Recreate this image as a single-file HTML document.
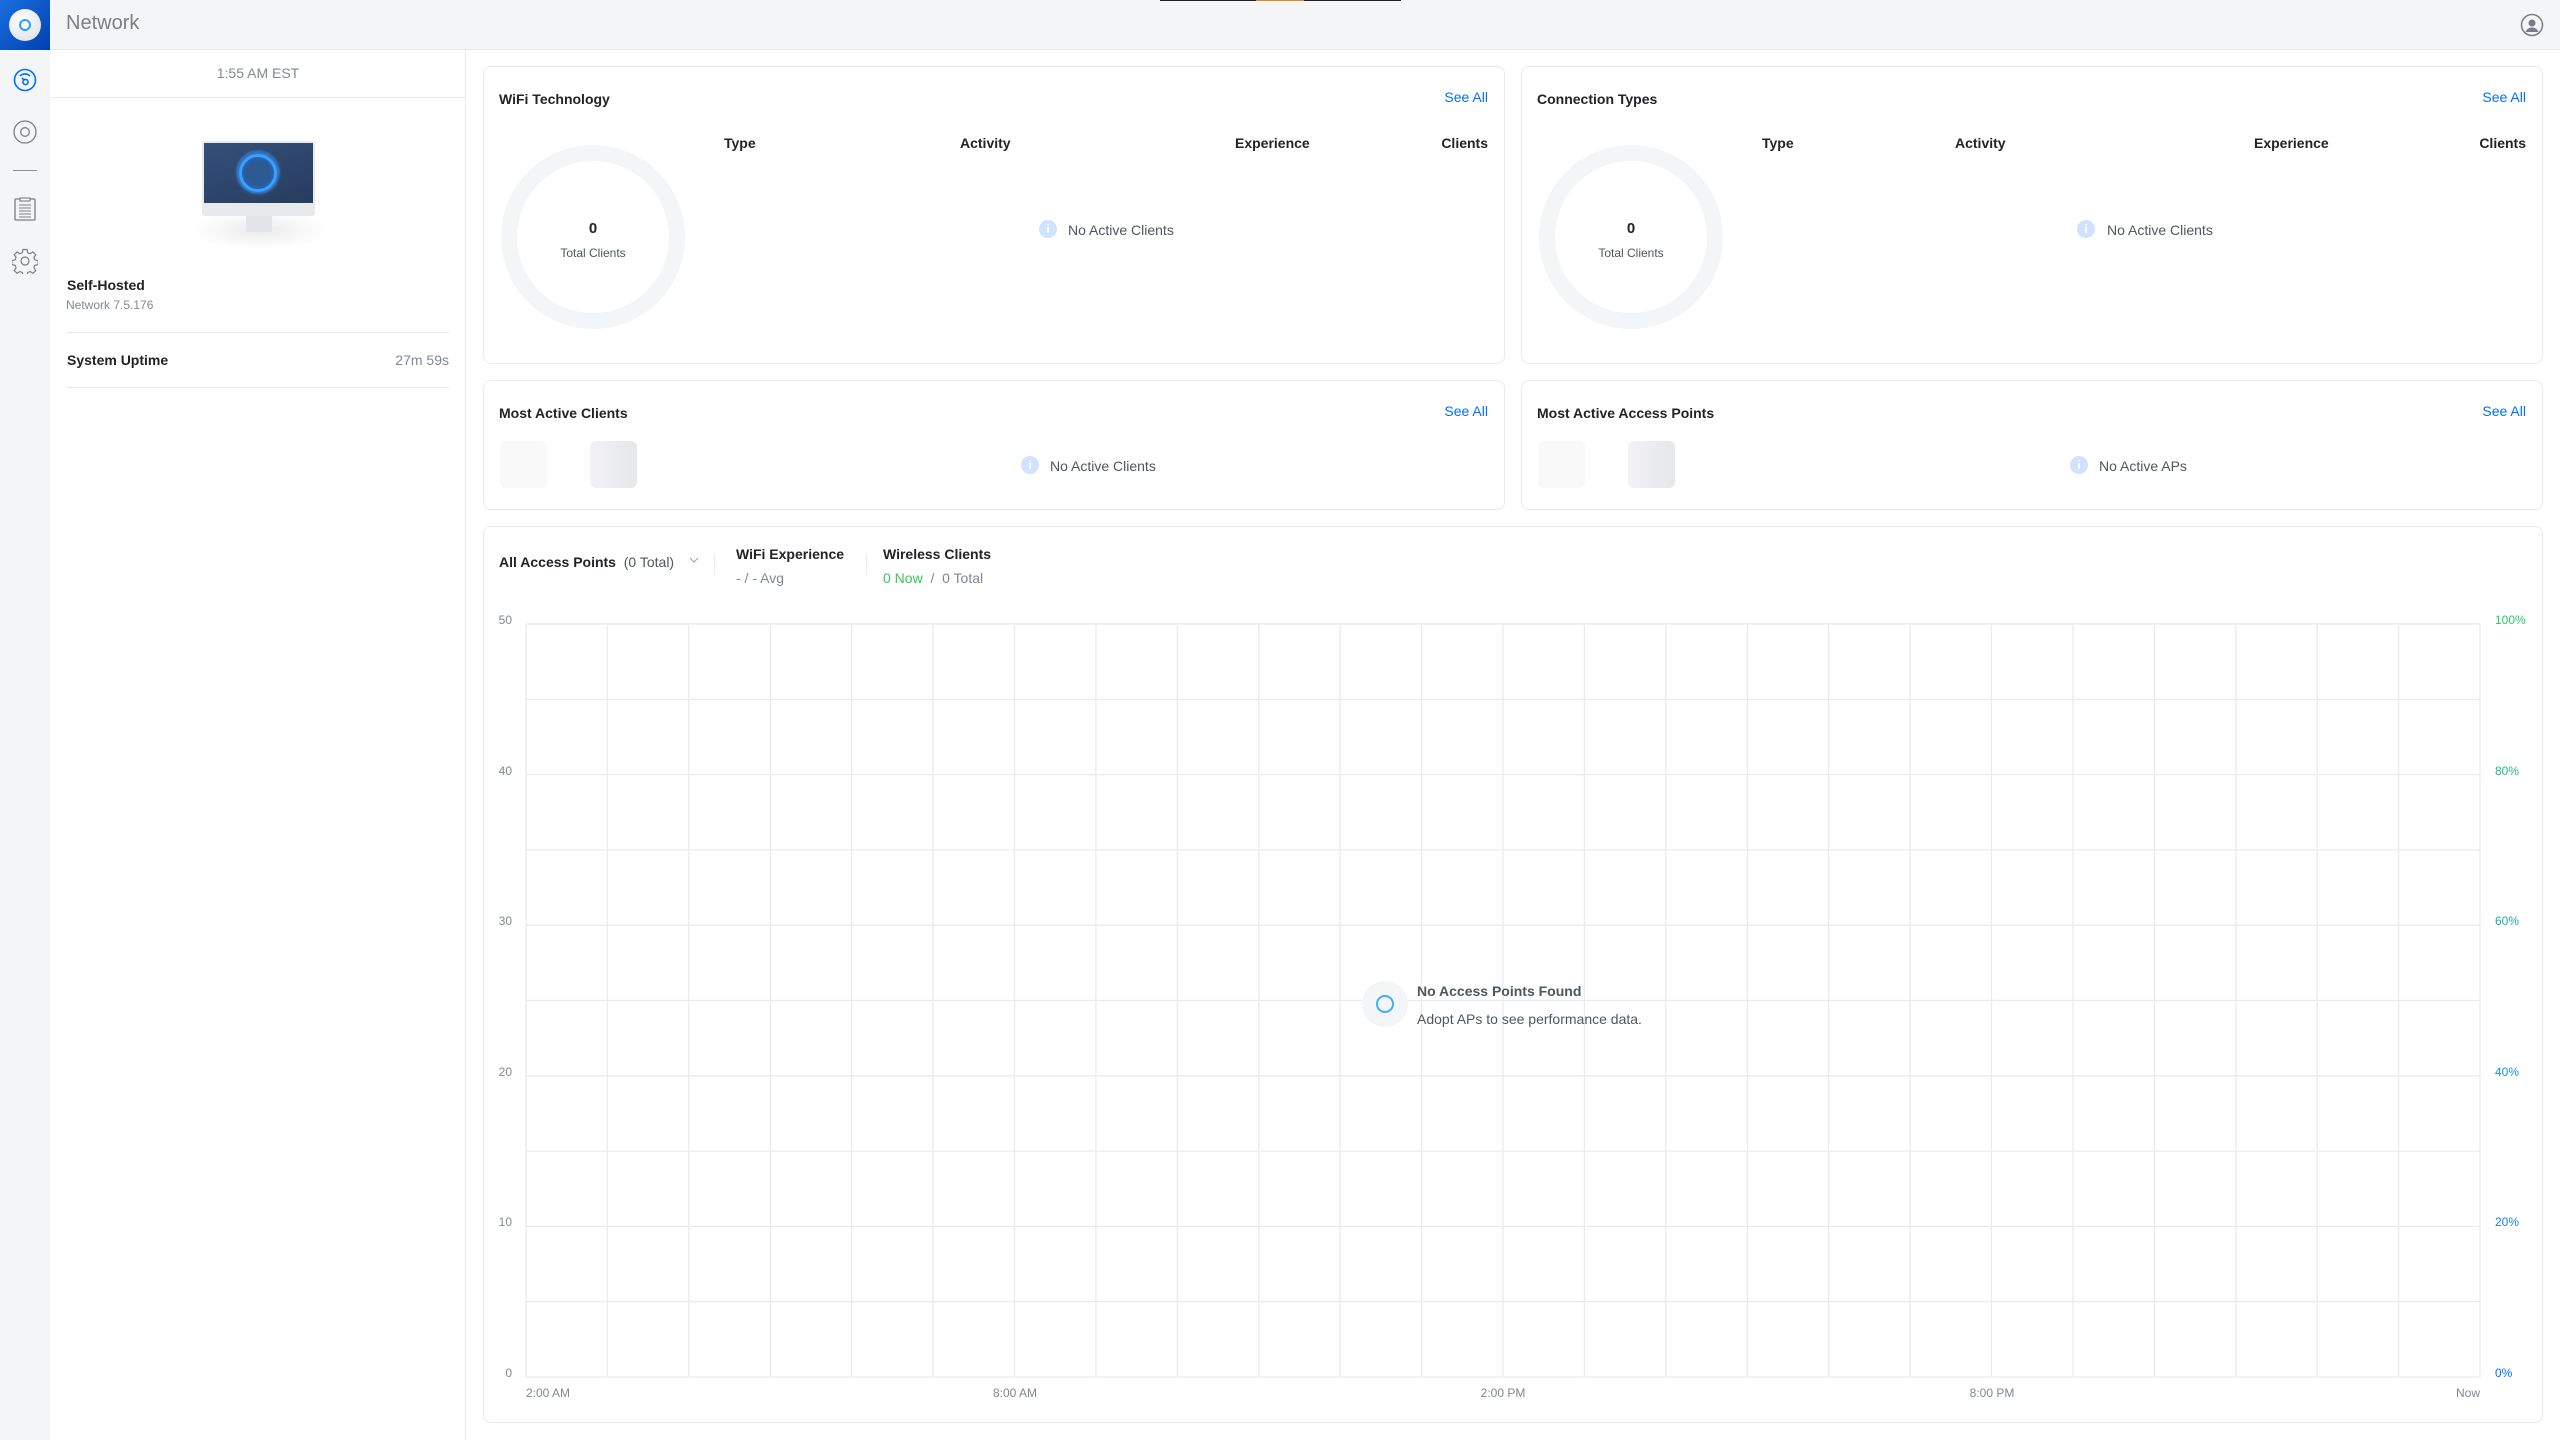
<!DOCTYPE html>
<html><head><meta charset="utf-8"><style>
*{margin:0;padding:0;box-sizing:border-box}
body{width:2560px;height:1440px;position:relative;background:#fff;font-family:"Liberation Sans",sans-serif;color:#212327;overflow:hidden}
.a{position:absolute;white-space:nowrap}
.card{position:absolute;border:1px solid #e9eaec;border-radius:8px;background:#fff}
.t{font-size:14px;font-weight:bold;color:#212327}
.see{font-size:14px;color:#006fff}
.th{font-size:14px;font-weight:bold}
.g{color:#808893}
.info{position:absolute;width:18px;height:18px;border-radius:50%;background:#cfe2ff;color:#fff;font-size:12px;text-align:center;line-height:18px;font-weight:bold}
.hr{position:absolute;height:1px;background:#e9eaec}
</style></head><body>
<!-- header -->
<div class="a" style="left:0;top:0;width:2560px;height:50px;background:#f4f5f7;border-bottom:1px solid #e6e7ea"></div>
<div class="a" style="left:1160px;top:0;width:241px;height:1px;background:#222"></div>
<div class="a" style="left:1256px;top:0;width:48px;height:1px;background:#e08a1e"></div>
<div class="a" style="left:0;top:0;width:50px;height:50px;background:linear-gradient(135deg,#1a6fe0,#0040b0)"></div>
<div class="a" style="left:9px;top:9px;width:32px;height:32px;border-radius:50%;background:radial-gradient(circle at 40% 35%,#fff,#d8dce2)"></div>
<div class="a" style="left:19px;top:19px;width:12px;height:12px;border-radius:50%;border:2px solid #2aa0ff"></div>
<div class="a" style="left:66px;top:12px;font-size:20px;color:#7a7f88">Network</div>
<svg class="a" style="left:2520px;top:13px" width="24" height="24" viewBox="0 0 24 24"><circle cx="12" cy="12" r="10.5" fill="none" stroke="#777c85" stroke-width="1.5"/><circle cx="12" cy="10" r="3.5" fill="#777c85"/><path d="M5.5 19c1.5-3.5 4-4.5 6.5-4.5s5 1 6.5 4.5" fill="#777c85"/></svg>
<!-- sidebar -->
<div class="a" style="left:0;top:50px;width:50px;height:1390px;background:#f4f5f7"></div>
<svg class="a" style="left:13px;top:68px" width="24" height="24" viewBox="0 0 24 24"><circle cx="12" cy="12" r="10.5" fill="none" stroke="#006fff" stroke-width="1.6"/><path d="M7 8a7 7 0 0 1 10 0" fill="none" stroke="#006fff" stroke-width="1.6"/><circle cx="12.5" cy="14" r="2.6" fill="none" stroke="#006fff" stroke-width="1.6"/><path d="M9 10l2 2" stroke="#006fff" stroke-width="1.6"/></svg>
<svg class="a" style="left:13px;top:120px" width="24" height="24" viewBox="0 0 24 24"><circle cx="12" cy="12" r="11" fill="none" stroke="#7a7f88" stroke-width="1.3"/><circle cx="12" cy="12" r="4.3" fill="none" stroke="#7a7f88" stroke-width="1.3"/></svg>
<div class="a" style="left:13px;top:170px;width:24px;height:1px;background:#8a8f98"></div>
<svg class="a" style="left:14px;top:197px" width="22" height="24" viewBox="0 0 22 24"><rect x="1" y="2" width="20" height="21" rx="1" fill="none" stroke="#7a7f88" stroke-width="1.3"/><rect x="6" y="1" width="10" height="3" fill="#f4f5f7" stroke="#7a7f88" stroke-width="1.1"/><path d="M5 8h12M5 11h12M5 14h12M5 17h12M5 20h12" stroke="#7a7f88" stroke-width="1"/></svg>
<svg class="a" style="left:12px;top:248px" width="26" height="26" viewBox="0 0 26 26"><path d="M11 1.5h4l.7 3.2 2.4 1 2.8-1.8 2.8 2.8-1.8 2.8 1 2.4 3.2.7v4l-3.2.7-1 2.4 1.8 2.8-2.8 2.8-2.8-1.8-2.4 1-.7 3.2h-4l-.7-3.2-2.4-1-2.8 1.800-2.8-2.8 1.8-2.8-1-2.4-3.2-.7v-4l3.2-.7 1-2.4-1.8-2.8 2.8-2.8 2.8 1.8 2.4-1z" fill="none" stroke="#7a7f88" stroke-width="1.2"/><circle cx="13" cy="13" r="4" fill="none" stroke="#7a7f88" stroke-width="1.2"/></svg>
<!-- left panel -->
<div class="a" style="left:50px;top:50px;width:416px;height:1390px;background:#fff;border-right:1px solid #e9eaec"></div>
<div class="a g" style="left:50px;top:65px;width:416px;text-align:center;font-size:14px">1:55 AM EST</div>
<div class="hr" style="left:50px;top:97px;width:415px"></div>
<div class="a" style="left:190px;top:210px;width:140px;height:40px;border-radius:50%;background:radial-gradient(ellipse,rgba(0,0,0,.08),rgba(0,0,0,0) 70%)"></div>
<div class="a" style="left:202px;top:141px;width:113px;height:75px;background:#e8e9ed;border-radius:3px"></div>
<div class="a" style="left:204px;top:143px;width:109px;height:60px;background:linear-gradient(160deg,#34507a,#283c5e)"></div>
<div class="a" style="left:236px;top:150px;width:44px;height:44px;border-radius:50%;background:radial-gradient(circle,#2d5a90 0,#2d5a90 50%,rgba(60,140,255,.35) 70%,rgba(60,140,255,0) 100%)"></div>
<div class="a" style="left:239px;top:154px;width:38px;height:38px;border-radius:50%;border:3px solid #3aa0ff;box-shadow:0 0 6px #3aa0ff, inset 0 0 6px #1e6fe0"></div>
<div class="a" style="left:246px;top:216px;width:26px;height:16px;background:#e3e5e9"></div>
<div class="a t" style="left:67px;top:277px;font-size:14px">Self-Hosted</div>
<div class="a g" style="left:66px;top:298px;font-size:12px">Network 7.5.176</div>
<div class="hr" style="left:66px;top:332px;width:383px"></div>
<div class="a t" style="left:67px;top:352px;font-size:14px">System Uptime</div>
<div class="a g" style="right:2111px;top:352px;font-size:14px">27m 59s</div>
<div class="hr" style="left:66px;top:387px;width:383px"></div>

<!-- card 1 -->
<div class="card" style="left:483px;top:66px;width:1022px;height:298px"></div>
<div class="a t" style="left:499px;top:91px">WiFi Technology</div>
<div class="a see" style="right:1072px;top:89px">See All</div>
<div class="a" style="left:501px;top:145px;width:184px;height:184px;border-radius:50%;border:16px solid #f4f5f7"></div>
<div class="a" style="left:493px;top:220px;width:200px;text-align:center;font-size:15px;font-weight:bold">0</div>
<div class="a" style="left:493px;top:246px;width:200px;text-align:center;font-size:12px;color:#50565e">Total Clients</div>
<div class="a th" style="left:724px;top:135px">Type</div>
<div class="a th" style="left:960px;top:135px">Activity</div>
<div class="a th" style="left:1235px;top:135px">Experience</div>
<div class="a th" style="right:1072px;top:135px">Clients</div>
<div class="info" style="left:1039px;top:220px">i</div>
<div class="a" style="left:1068px;top:222px;font-size:14px;color:#50565e">No Active Clients</div>
<!-- card 2 -->
<div class="card" style="left:1521px;top:66px;width:1022px;height:298px"></div>
<div class="a t" style="left:1537px;top:91px">Connection Types</div>
<div class="a see" style="right:34px;top:89px">See All</div>
<div class="a" style="left:1539px;top:145px;width:184px;height:184px;border-radius:50%;border:16px solid #f4f5f7"></div>
<div class="a" style="left:1531px;top:220px;width:200px;text-align:center;font-size:15px;font-weight:bold">0</div>
<div class="a" style="left:1531px;top:246px;width:200px;text-align:center;font-size:12px;color:#50565e">Total Clients</div>
<div class="a th" style="left:1762px;top:135px">Type</div>
<div class="a th" style="left:1955px;top:135px">Activity</div>
<div class="a th" style="left:2254px;top:135px">Experience</div>
<div class="a th" style="right:34px;top:135px">Clients</div>
<div class="info" style="left:2077px;top:220px">i</div>
<div class="a" style="left:2107px;top:222px;font-size:14px;color:#50565e">No Active Clients</div>
<!-- card 3 -->
<div class="card" style="left:483px;top:380px;width:1022px;height:130px"></div>
<div class="a t" style="left:499px;top:405px">Most Active Clients</div>
<div class="a see" style="right:1072px;top:403px">See All</div>
<div class="a" style="left:500px;top:441px;width:47px;height:47px;border-radius:6px;background:#f9f9fa"></div>
<div class="a" style="left:590px;top:441px;width:47px;height:47px;border-radius:6px;background:linear-gradient(90deg,#f2f2f4,#e6e7e9)"></div>
<div class="info" style="left:1021px;top:456px">i</div>
<div class="a" style="left:1050px;top:458px;font-size:14px;color:#50565e">No Active Clients</div>
<!-- card 4 -->
<div class="card" style="left:1521px;top:380px;width:1022px;height:130px"></div>
<div class="a t" style="left:1537px;top:405px">Most Active Access Points</div>
<div class="a see" style="right:34px;top:403px">See All</div>
<div class="a" style="left:1538px;top:441px;width:47px;height:47px;border-radius:6px;background:#f9f9fa"></div>
<div class="a" style="left:1628px;top:441px;width:47px;height:47px;border-radius:6px;background:linear-gradient(90deg,#f2f2f4,#e6e7e9)"></div>
<div class="info" style="left:2070px;top:456px">i</div>
<div class="a" style="left:2099px;top:458px;font-size:14px;color:#50565e">No Active APs</div>
<!-- card 5 -->
<div class="card" style="left:483px;top:526px;width:2060px;height:897px"></div>
<div class="a" style="left:499px;top:554px;font-size:14px"><b>All Access Points</b>&nbsp; <span style="color:#50565e">(0 Total)</span></div>
<svg class="a" style="left:689px;top:557px" width="10" height="7"><path d="M1 1l4 4 4-4" fill="none" stroke="#9aa0a8" stroke-width="1"/></svg>
<div class="a" style="left:714px;top:555px;width:1px;height:20px;background:#e9eaec"></div>
<div class="a th" style="left:736px;top:546px">WiFi Experience</div>
<div class="a g" style="left:736px;top:570px;font-size:14px">- / - Avg</div>
<div class="a" style="left:866px;top:555px;width:1px;height:20px;background:#e9eaec"></div>
<div class="a th" style="left:883px;top:546px">Wireless Clients</div>
<div class="a g" style="left:883px;top:570px;font-size:14px"><span style="color:#39c55e">0 Now</span>&nbsp; /&nbsp; 0 Total</div>
<svg class="a" style="left:0;top:0" width="2560" height="1440">
<g stroke="#ebecef" stroke-width="1.3" fill="none">
<rect x="526" y="624" width="1954" height="753"/>
<path d="M607.4 624V1377M688.8 624V1377M770.3 624V1377M851.7 624V1377M933.1 624V1377M1014.5 624V1377M1095.9 624V1377M1177.3 624V1377M1258.8 624V1377M1340.2 624V1377M1421.6 624V1377M1503 624V1377M1584.4 624V1377M1665.8 624V1377M1747.3 624V1377M1828.7 624V1377M1910.1 624V1377M1991.5 624V1377M2072.9 624V1377M2154.3 624V1377M2235.8 624V1377M2317.2 624V1377M2398.6 624V1377"/>
<path d="M526 699.3H2480M526 774.6H2480M526 849.9H2480M526 925.2H2480M526 1000.5H2480M526 1075.8H2480M526 1151.1H2480M526 1226.4H2480M526 1301.7H2480"/>
</g>
<g font-family="Liberation Sans, sans-serif" font-size="12" fill="#808893" text-anchor="end">
<text x="512" y="624">50</text><text x="512" y="775">40</text><text x="512" y="925">30</text><text x="512" y="1076">20</text><text x="512" y="1226">10</text><text x="512" y="1377">0</text>
</g>
<g font-family="Liberation Sans, sans-serif" font-size="12">
<text x="2495" y="624" fill="#2ec86a">100%</text><text x="2495" y="775" fill="#22bb8a">80%</text><text x="2495" y="925" fill="#1faab0">60%</text><text x="2495" y="1076" fill="#1a90d8">40%</text><text x="2495" y="1226" fill="#1480f0">20%</text><text x="2495" y="1377" fill="#006fff">0%</text>
</g>
<g font-family="Liberation Sans, sans-serif" font-size="12" fill="#808893">
<text x="526" y="1397">2:00 AM</text><text x="1015" y="1397" text-anchor="middle">8:00 AM</text><text x="1503" y="1397" text-anchor="middle">2:00 PM</text><text x="1992" y="1397" text-anchor="middle">8:00 PM</text><text x="2480" y="1397" text-anchor="end">Now</text>
</g>
<circle cx="1385" cy="1004" r="23" fill="#f4f5f7"/>
<circle cx="1385" cy="1004" r="8" fill="none" stroke="#3ab0ff" stroke-width="2"/>
</svg>
<div class="a" style="left:1417px;top:983px;font-size:14px;font-weight:bold;color:#50565e">No Access Points Found</div>
<div class="a" style="left:1417px;top:1011px;font-size:14px;color:#50565e">Adopt APs to see performance data.</div>
</body></html>
